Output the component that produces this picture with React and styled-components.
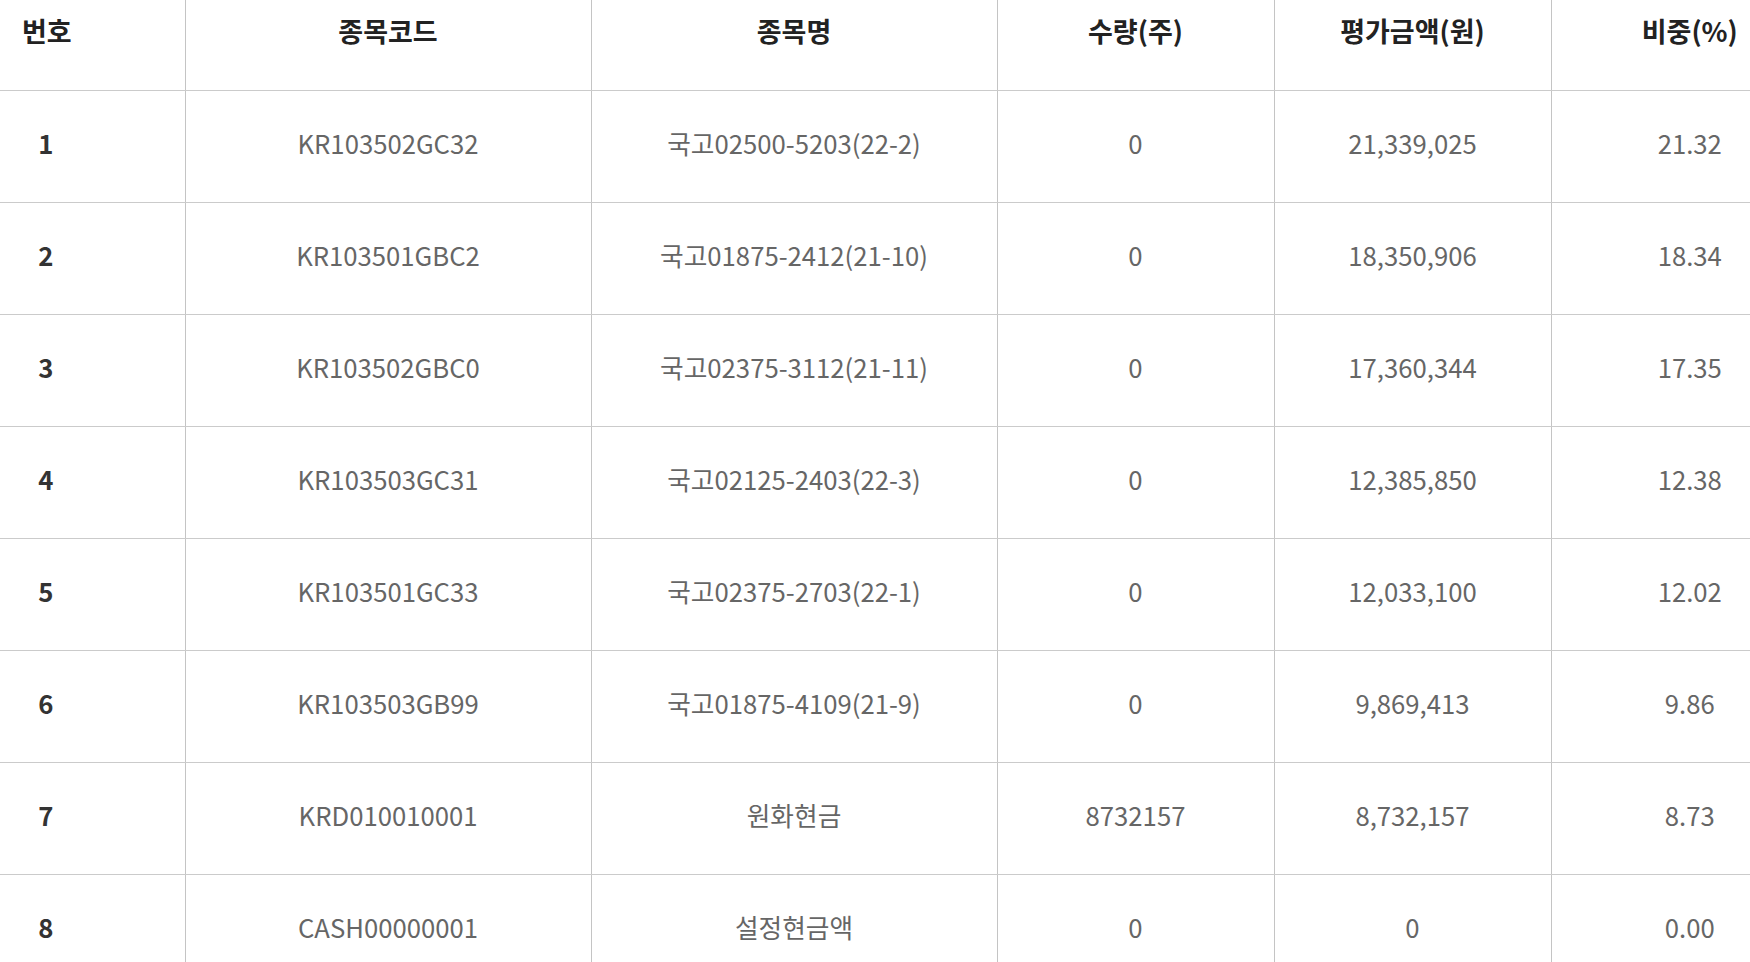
import React from "react";
import styled, { createGlobalStyle } from "styled-components";

const GlobalStyle = createGlobalStyle`
    html, body {
        margin: 0;
        padding: 0;
        background: #fff;
        overflow: hidden;
    }
    body {
        font-family: "Noto Sans CJK KR", "Noto Sans", sans-serif;
    }
`;

const Wrapper = styled.div`
    width: 1750px;
    height: 962px;
    overflow: hidden;
`;

const Table = styled.table`
    width: 1828px;
    table-layout: fixed;
    border-collapse: collapse;
    border-spacing: 0;
`;

const Th = styled.th`
    height: 90px;
    padding: ${(p) => (p.$first ? "12px 115px 0 22px" : "12px 0 0")};
    vertical-align: top;
    text-align: center;
    font-size: 27px;
    font-weight: 700;
    line-height: 38px;
    color: #222;
    border-bottom: 1px solid #cbcbcb;
    border-left: ${(p) => (p.$first ? "none" : "1px solid #c4c4c4")};
    box-sizing: border-box;
    white-space: nowrap;
`;

const Td = styled.td`
    height: 112px;
    padding: ${(p) => (p.$first ? "0 115px 7px 22px" : "0 0 7px")};
    vertical-align: middle;
    text-align: center;
    font-size: 25.7px;
    font-weight: ${(p) => (p.$first ? 700 : 400)};
    line-height: 38px;
    color: ${(p) => (p.$first ? "#333" : "#666")};
    border-bottom: 1px solid #cbcbcb;
    border-left: ${(p) => (p.$first ? "none" : "1px solid #c4c4c4")};
    box-sizing: border-box;
    white-space: nowrap;
`;

const columns = [
    { label: "번호", width: 185 },
    { label: "종목코드", width: 406 },
    { label: "종목명", width: 406 },
    { label: "수량(주)", width: 277 },
    { label: "평가금액(원)", width: 277 },
    { label: "비중(%)", width: 277 },
];

const rows = [
    ["1", "KR103502GC32", "국고02500-5203(22-2)", "0", "21,339,025", "21.32"],
    ["2", "KR103501GBC2", "국고01875-2412(21-10)", "0", "18,350,906", "18.34"],
    ["3", "KR103502GBC0", "국고02375-3112(21-11)", "0", "17,360,344", "17.35"],
    ["4", "KR103503GC31", "국고02125-2403(22-3)", "0", "12,385,850", "12.38"],
    ["5", "KR103501GC33", "국고02375-2703(22-1)", "0", "12,033,100", "12.02"],
    ["6", "KR103503GB99", "국고01875-4109(21-9)", "0", "9,869,413", "9.86"],
    ["7", "KRD010010001", "원화현금", "8732157", "8,732,157", "8.73"],
    ["8", "CASH00000001", "설정현금액", "0", "0", "0.00"],
];

export default function App() {
    return (
        <>
            <GlobalStyle />
            <Wrapper>
                <Table>
                    <colgroup>
                        {columns.map((c) => (
                            <col key={c.label} style={{ width: c.width }} />
                        ))}
                    </colgroup>
                    <thead>
                        <tr>
                            {columns.map((c, i) => (
                                <Th key={c.label} $first={i === 0}>
                                    {c.label}
                                </Th>
                            ))}
                        </tr>
                    </thead>
                    <tbody>
                        {rows.map((r) => (
                            <tr key={r[0]}>
                                {r.map((v, i) => (
                                    <Td key={i} $first={i === 0}>
                                        {v}
                                    </Td>
                                ))}
                            </tr>
                        ))}
                    </tbody>
                </Table>
            </Wrapper>
        </>
    );
}
